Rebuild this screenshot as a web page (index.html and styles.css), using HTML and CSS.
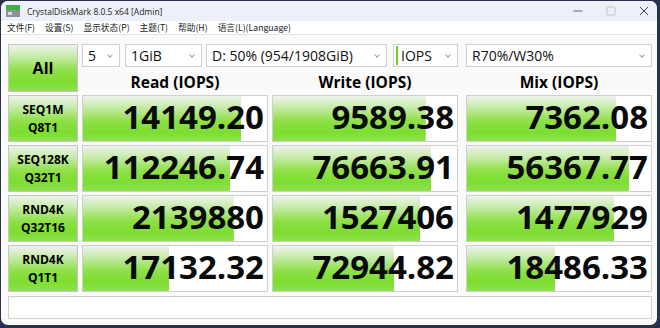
FILE: index.html
```html
<!DOCTYPE html>
<html lang="zh-CN">
<head>
  <meta charset="UTF-8" />
  <title>CrystalDiskMark 8.0.5 x64 [Admin]</title>
  <link rel="stylesheet" href="styles.css">
</head>
<body>

<div class="window">

  <!-- Title bar -->
  <div class="titlebar">
    <svg class="app-icon" width="14" height="12" viewBox="0 0 14 12">
      <rect x="0" y="0" width="14" height="5" fill="#3cb043"/>
      <rect x="0" y="5" width="14" height="7" fill="#8d9299"/>
      <rect x="2" y="7" width="4" height="3" fill="#d8dade"/>
    </svg>
    <span class="title">CrystalDiskMark 8.0.5 x64 [Admin]</span>
    <div class="controls">
      <svg width="10" height="10" viewBox="0 0 10 10"><path d="M0.5 5h9" stroke="#666" stroke-width="1"/></svg>
      <svg width="10" height="10" viewBox="0 0 10 10"><rect x="1" y="1" width="8" height="8" rx="1" fill="none" stroke="#c4c4c8" stroke-width="1"/></svg>
      <svg width="10" height="10" viewBox="0 0 10 10"><path d="M1 1l8 8M9 1l-8 8" stroke="#444" stroke-width="1"/></svg>
    </div>
  </div>

  <!-- Menu -->
  <div class="menubar">
    <span>文件(F)</span>
    <span>设置(S)</span>
    <span>显示状态(P)</span>
    <span>主题(T)</span>
    <span>帮助(H)</span>
    <span>语言(L)(Language)</span>
  </div>

  <!-- Main -->
  <div class="content">
    <div class="grid">
      <div class="all-btn">All</div>

      <div class="combos">
        <div class="combo w-count">5<i class="chev"></i></div>
        <div class="combo w-size">1GiB<i class="chev"></i></div>
        <div class="combo w-drive">D: 50% (954/1908GiB)<i class="chev"></i></div>
        <div class="combo w-unit"><b class="unit-mark"></b>IOPS<i class="chev"></i></div>
      </div>
      <div class="combo col4">R70%/W30%<i class="chev"></i></div>

      <div class="head">Read (IOPS)</div>
      <div class="head">Write (IOPS)</div>
      <div class="head col4">Mix (IOPS)</div>

      <div class="label">SEQ1M<br>Q8T1</div>
      <div class="value" style="--w:86%">14149.20</div>
      <div class="value" style="--w:83%">9589.38</div>
      <div class="value col4" style="--w:81%">7362.08</div>

      <div class="label">SEQ128K<br>Q32T1</div>
      <div class="value" style="--w:80%">112246.74</div>
      <div class="value" style="--w:86%">76663.91</div>
      <div class="value col4" style="--w:88%">56367.77</div>

      <div class="label">RND4K<br>Q32T16</div>
      <div class="value" style="--w:82%">2139880</div>
      <div class="value" style="--w:80%">1527406</div>
      <div class="value col4" style="--w:80%">1477929</div>

      <div class="label">RND4K<br>Q1T1</div>
      <div class="value" style="--w:47%">17132.32</div>
      <div class="value" style="--w:66%">72944.82</div>
      <div class="value col4" style="--w:48%">18486.33</div>

      <div class="comment"></div>
    </div>
  </div>

</div>

</body>
</html>
```

FILE: styles.css
```css
* { margin: 0; padding: 0; box-sizing: border-box; }

html, body {
  width: 660px;
  height: 328px;
  overflow: hidden;
}

body {
  background: #283250;
  padding: 1px 3px 3px 1px;
  font-family: 'Open Sans', 'Noto Sans', 'Noto Sans CJK SC', sans-serif;
  color: #000;
}

.window {
  width: 656px;
  height: 324px;
  background: #fafafa;
  border-radius: 7px;
  overflow: hidden;
  display: flex;
  flex-direction: column;
}

/* title bar */
.titlebar {
  height: 20px;
  background: #eef0f8;
  display: flex;
  align-items: center;
  padding-left: 5px;
}

.app-icon { margin-right: 7px; }

.title {
  font-size: 8.5px;
  color: #222;
}

.controls {
  margin-left: auto;
  display: flex;
  gap: 23px;
  padding-right: 8px;
}

/* menu */
.menubar {
  height: 14px;
  background: #fff;
  border-bottom: 1px solid #e4e4e4;
  display: flex;
  align-items: center;
  gap: 10px;
  padding-left: 6px;
  font-family: 'Noto Sans CJK SC', sans-serif;
  font-size: 8.7px;
  color: #1a1a1a;
}

/* main grid */
.content {
  padding: 9px 5px 0 7px;
}

.grid {
  display: grid;
  grid-template-columns: 70px 186px 186px 190px;
  grid-template-rows: 23px 22px 47px 47px 47px 47px 24px;
  column-gap: 4px;
  row-gap: 3px;
}

.col4 { margin-left: 4px; }

.all-btn,
.label {
  border: 1px solid #c6c6c6;
  background: linear-gradient(to bottom, #eef3ec 0%, #c6ebaa 25%, #8fe048 55%, #7ddd30 80%, #8ee24c 100%);
  display: flex;
  align-items: center;
  justify-content: center;
  text-align: center;
  font-weight: 700;
}

.all-btn {
  grid-row: 1 / 3;
  font-size: 16px;
}

.label {
  font-size: 12px;
  line-height: 18px;
}

.combos {
  grid-column: 2 / 4;
  display: flex;
}

.combo {
  height: 23px;
  background: #fff;
  border: 1px solid #d0d0d0;
  display: flex;
  align-items: center;
  padding-left: 5px;
  font-size: 14px;
  color: #111;
  position: relative;
}

.w-count { width: 38px; margin-right: 5px; }
.w-size { width: 77px; margin-right: 4px; }
.w-drive { width: 181px; margin-right: 6px; }
.w-unit { width: 65px; padding-left: 2px; }

.unit-mark {
  width: 2px;
  height: 19px;
  background: #6cd22a;
  margin-right: 3px;
}

.chev {
  position: absolute;
  right: 7px;
  top: 8px;
  width: 4px;
  height: 4px;
  border-right: 1px solid #a0a0a0;
  border-bottom: 1px solid #a0a0a0;
  transform: rotate(45deg);
}

.head {
  font-size: 15.5px;
  font-weight: 700;
  text-align: center;
  line-height: 20px;
  align-self: end;
}

.value {
  border: 1px solid #cfcfcf;
  background: #fff linear-gradient(to bottom, #eef3ec 0%, #c6ebaa 25%, #8fe048 55%, #7ddd30 80%, #8ee24c 100%) no-repeat;
  background-size: var(--w) 100%;
  font-size: 33px;
  font-weight: 700;
  text-align: right;
  line-height: 41px;
  padding: 0 3px 6px 0;
  color: #0a0a0a;
  overflow: hidden;
}

.comment {
  grid-column: 1 / 5;
  margin-top: 1px;
  background: #fff;
  border: 1px solid #cfcfcf;
}
```
